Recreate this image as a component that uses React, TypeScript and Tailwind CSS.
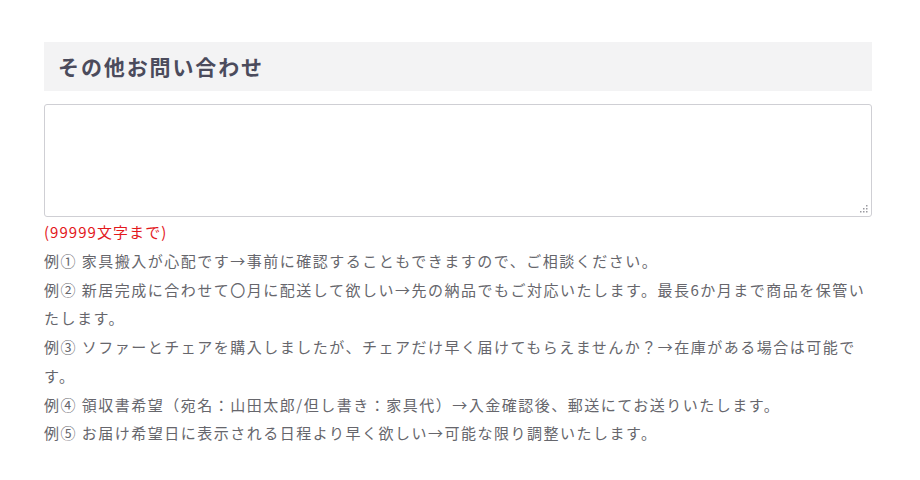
export default function App() {
  const examples = [
    "例① 家具搬入が心配です→事前に確認することもできますので、ご相談ください。",
    "例② 新居完成に合わせて〇月に配送して欲しい→先の納品でもご対応いたします。最長6か月まで商品を保管いたします。",
    "例③ ソファーとチェアを購入しましたが、チェアだけ早く届けてもらえませんか？→在庫がある場合は可能です。",
    "例④ 領収書希望（宛名：山田太郎/但し書き：家具代）→入金確認後、郵送にてお送りいたします。",
    "例⑤ お届け希望日に表示される日程より早く欲しい→可能な限り調整いたします。",
  ];

  return (
    <div
      className="min-h-[480px] w-[920px] bg-white pt-[42px] pl-[44px]"
      style={{ fontFamily: '"Noto Sans CJK JP", "Noto Sans", sans-serif' }}
    >
      <div className="w-[828px]">
        <h2 className="flex h-[49px] items-center bg-[#f3f3f4] px-[14px] text-[21px] font-bold tracking-[0.09em] text-[#4b4b5c]">
          その他お問い合わせ
        </h2>
        <div className="relative mt-[13px]">
          <textarea className="block h-[113px] w-full resize-none rounded-[3px] border border-[#cfcfd4] bg-white p-2 text-[15px] outline-none" />
          <svg className="absolute right-[4px] bottom-[4px]" width="9" height="9" viewBox="0 0 9 9" fill="#9a9aa0">
            <rect x="7" y="1" width="1.5" height="1.5" />
            <rect x="4" y="4" width="1.5" height="1.5" />
            <rect x="7" y="4" width="1.5" height="1.5" />
            <rect x="1" y="7" width="1.5" height="1.5" />
            <rect x="4" y="7" width="1.5" height="1.5" />
            <rect x="7" y="7" width="1.5" height="1.5" />
          </svg>
        </div>
        <p className="text-[15px] leading-[30px] tracking-[0.07em] text-[#e3181c]">(99999文字まで)</p>
        <div className="text-[15px] leading-[28.7px] tracking-[0.1em] text-[#66666c]">
          {examples.map((t) => (
            <p key={t}>{t}</p>
          ))}
        </div>
      </div>
    </div>
  );
}
